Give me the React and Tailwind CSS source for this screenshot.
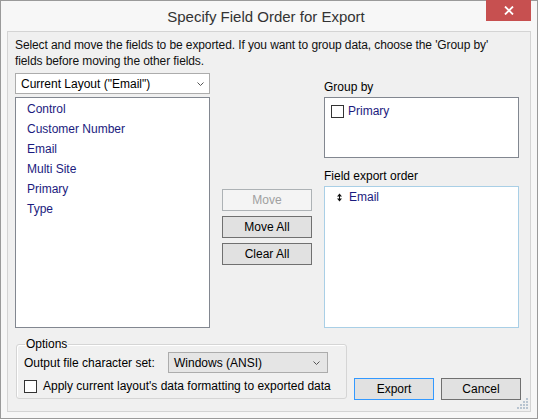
import React from "react";

const font = { fontFamily: '"Liberation Sans", Arial, sans-serif' };

const Chevron = () => (
  <svg width="7" height="4" viewBox="0 0 7 4" className="shrink-0">
    <path d="M0.5 0.5 L3.5 3.5 L6.5 0.5" fill="none" stroke="#555" strokeWidth="1" />
  </svg>
);

const Checkbox = () => (
  <span className="inline-block w-[13px] h-[13px] border border-[#333] bg-white shrink-0" />
);

const MoveHandle = () => (
  <svg width="5" height="9" viewBox="0 0 5 9" className="shrink-0">
    <polygon points="0,3.5 2.5,0.5 5,3.5" fill="#111" />
    <rect x="2" y="3" width="1" height="3" fill="#111" />
    <polygon points="0,5.5 2.5,8.5 5,5.5" fill="#111" />
  </svg>
);

const WinButton = ({ children, disabled, focused, className = "" }) => (
  <button
    className={`h-[22px] w-[80px] text-[12px] leading-none flex items-center justify-center border ${
      disabled
        ? "bg-[#f4f4f4] border-[#adb2b5] text-[#a0a0a0]"
        : focused
          ? "bg-[#e1e1e1] border-[#3399ff] text-black"
          : "bg-[#e1e1e1] border-[#707070] text-black"
    } ${className}`}
  >
    {children}
  </button>
);

const fields = ["Control", "Customer Number", "Email", "Multi Site", "Primary", "Type"];

export default function App() {
  return (
    <div
      style={font}
      className="w-[538px] h-[419px] border border-[#9a9a9a] bg-[#f7f7f7] flex flex-col px-[6px] pb-[6px] text-[12px] text-black"
    >
      {/* title bar */}
      <div className="relative h-[30px] shrink-0 flex items-center justify-center">
        <span className="text-[15px] text-[#333] pt-[2px] pr-[6px]">Specify Field Order for Export</span>
        <div className="absolute top-[-1px] right-[0px] w-[45px] h-[21px] bg-[#c75050] flex items-center justify-center">
          <svg width="10" height="9" viewBox="0 0 10 9">
            <path d="M1 0.5 L9 8.5 M9 0.5 L1 8.5" stroke="#fff" strokeWidth="1.8" />
          </svg>
        </div>
      </div>

      {/* body */}
      <div className="relative flex-1 border border-[#d4d4d4] bg-[#f0f0f0] px-[7px] pt-[5px] flex flex-col">
        <p className="leading-[16px] text-[#111] tracking-[-0.1px]">
          Select and move the fields to be exported. If you want to group data, choose the 'Group by'
          <br />
          fields before moving the other fields.
        </p>

        <div className="mt-[4px] flex h-[255px]">
          {/* left column */}
          <div className="w-[195px] flex flex-col">
            <div className="h-[21px] border border-[#acacac] bg-white flex items-center justify-between pl-[5px] pr-[5px]">
              <span>Current Layout ("Email")</span>
              <Chevron />
            </div>
            <div className="mt-[3px] flex-1 border border-[#828790] bg-white pt-[1px] pl-[11px]">
              {fields.map((f) => (
                <div key={f} className="h-[20px] leading-[20px] text-[#1b1b7e]">
                  {f}
                </div>
              ))}
            </div>
          </div>

          {/* middle buttons */}
          <div className="ml-[12px] w-[90px] pt-[116px] flex flex-col gap-[5px]">
            <WinButton disabled className="w-[90px]">Move</WinButton>
            <WinButton className="w-[90px]">Move All</WinButton>
            <WinButton className="w-[90px]">Clear All</WinButton>
          </div>

          {/* right column */}
          <div className="ml-[12px] w-[195px] flex flex-col pt-[6px]">
            <div className="h-[16px] leading-[16px]">Group by</div>
            <div className="mt-[2px] h-[61px] border border-[#828790] bg-white pt-[7px] pl-[6px] flex items-start gap-[4px]">
              <Checkbox />
              <span className="leading-[13px] text-[#1b1b7e]">Primary</span>
            </div>
            <div className="mt-[10px] h-[16px] leading-[16px]">Field export order</div>
            <div className="mt-[2px] flex-1 border border-[#a9cfe6] bg-white pt-[4px] pl-[12px] flex items-start gap-[7px]">
              <span className="h-[13px] flex items-center">
                <MoveHandle />
              </span>
              <span className="leading-[13px] text-[#1b1b7e]">Email</span>
            </div>
          </div>
        </div>

        {/* bottom */}
        <div className="mt-[8px] flex items-end">
          <fieldset className="ml-[1px] w-[331px] h-[63px] border border-[#d5d5d5] rounded-[3px] shadow-[inset_1px_1px_0_#ffffff] px-[7px]">
            <legend className="ml-[1px] px-[1px] leading-[16px]">Options</legend>
            <div className="flex items-center h-[21px]">
              <span className="w-[144px]">Output file character set:</span>
              <div className="w-[160px] h-[21px] border border-[#acacac] bg-[#e5e5e5] flex items-center justify-between pl-[5px] pr-[7px]">
                <span>Windows (ANSI)</span>
                <Chevron />
              </div>
            </div>
            <div className="mt-[4px] flex items-center gap-[6px]">
              <Checkbox />
              <span>Apply current layout's data formatting to exported data</span>
            </div>
          </fieldset>
          <WinButton focused className="ml-[7px] mb-[-1px]">Export</WinButton>
          <WinButton className="ml-[7px] mb-[-1px]">Cancel</WinButton>
        </div>

        {/* resize grip */}
        <svg className="absolute right-[2px] bottom-[2px]" width="11" height="11" viewBox="0 0 11 11">
          {[
            [9, 1], [9, 4], [6, 4], [9, 7], [6, 7], [3, 7], [9, 10], [6, 10], [3, 10], [0, 10],
          ].map(([x, y], i) => (
            <rect key={i} x={x} y={y - 1} width="2" height="2" fill="#b8c4d0" />
          ))}
        </svg>
      </div>
    </div>
  );
}
